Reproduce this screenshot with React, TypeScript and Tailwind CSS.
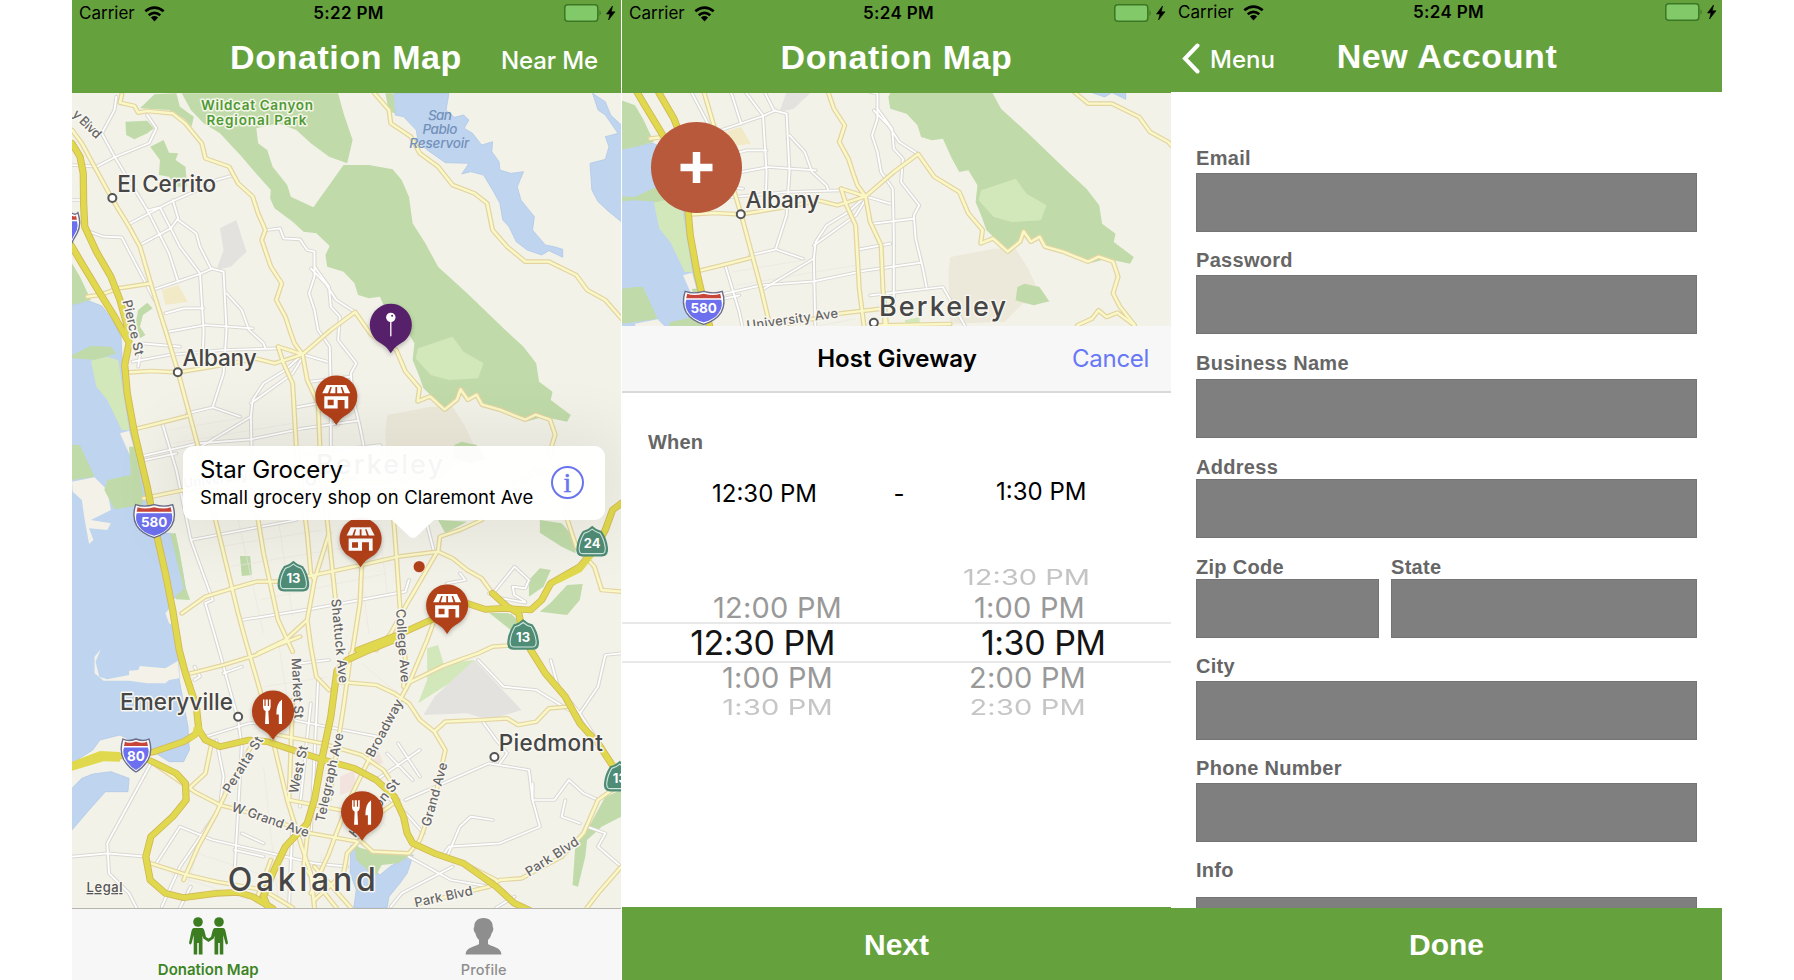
import React from "react";

type Pt = [number, number];

/* Map artwork is drawn on a fine survey grid; KX / KY bring it to screen pixels. */
const KX = 0.36352;
const KY = 1 / 3;
const px = (x: number) => x * KX - 12;
const py = (y: number) => y * KY;

const WATER = [
  "M-40 905L-10 890L33 915L80 903L115 918L145 960L168 1010L172 1100L185 1230L205 1340L235 1480L262 1600L305 1600L335 1700L345 1765L325 1790L300 1800L318 1880L325 1940L328 2040L352 2180L356 2250L340 2285L300 2285L250 2250L165 2205L110 2220L90 2250L33 2290L-40 2300Z",
  "M33 2365L60 2335L90 2322L140 2315L190 2335L187 2375L125 2375L80 2430L33 2490L-40 2520L-40 2400Z",
  "M920 280L1070 280L1062 330L1085 352L1110 345L1125 360L1112 385L1135 400L1160 435L1190 425L1188 455L1208 485L1210 510L1240 520L1275 515L1258 560L1268 600L1305 650L1300 690L1335 735L1360 740L1383 748L1383 772L1345 752L1325 765L1285 750L1255 725L1235 680L1218 660L1210 610L1190 570L1165 525L1130 515L1105 522L1125 490L1060 488L1010 450L985 425L980 390L945 350L922 345Z",
  "M1465 280L1500 305L1515 345L1544 375L1620 400L1620 700L1544 665L1510 635L1480 605L1463 570L1458 490L1500 478L1510 440L1500 410L1535 400L1500 345L1480 330Z",
  "M800 2535L820 2540L840 2585L880 2625L910 2598L960 2570L972 2565L955 2620L935 2650L905 2690L900 2723L808 2723L815 2670L798 2620Z",
];

const GREEN = [
  "M335 280L765 280L780 340L805 420L790 490L740 470L690 430L650 390L600 370L540 385L545 430L570 450L585 500L625 555L635 590L697 622L780 495L850 495L915 508L940 540L960 590L970 670L1005 730L1040 800L1120 880L1225 990L1275 1040L1310 1090L1318 1145L1355 1175L1350 1200L1405 1245L1395 1265L1330 1250L1290 1262L1240 1240L1180 1225L1150 1190L1120 1205L1100 1180L1060 1228L1000 1165L985 1120L970 1080L975 1030L950 985L925 990L905 950L880 890L850 895L820 885L810 850L780 815L735 800L730 765L742 738L705 700L670 695L640 665L590 625L578 595L580 570L535 515L500 470L440 400L395 370L360 330Z",
  "M220 325L260 283L320 280L330 320L368 350L362 380L340 355L300 330Z",
  "M180 365L240 362L258 385L240 400L205 418L182 405Z",
  "M248 440L285 420L300 458L325 460L318 480L345 500L350 560L320 560L300 530L272 525L275 480Z",
  "M895 280L918 280L922 340L905 335Z",
  "M33 790L55 830L85 900L33 915L-40 930L-40 760Z",
  "M33 1065L85 1038L140 1040L155 1060L100 1080L33 1075L-40 1080L-40 1062Z",
  "M33 1335L55 1335L95 1430L33 1440L-40 1450L-40 1345Z",
  "M130 1440L195 1425L190 1340L205 1340L230 1490L225 1515L150 1528L122 1470Z",
  "M495 1668L523 1668L528 1725L500 1728Z",
  "M303 1600L318 1600L330 1660L345 1760L358 1800L318 1798L320 1785L340 1768Z",
  "M215 930L240 908L255 925L228 945L220 980L235 1005L220 1015L208 970Z",
  "M1085 1335L1105 1325L1145 1335L1172 1378L1130 1382L1080 1375Z",
  "M1320 1560L1380 1570L1420 1620L1418 1660L1380 1640L1320 1598Z",
  "M1395 1755L1438 1752L1430 1800L1395 1845L1320 1835L1350 1808Z",
  "M1290 1740L1320 1705L1350 1710L1330 1760L1290 1790Z",
  "M1180 1838L1240 1840L1262 1865L1240 1890Z",
  "M1040 1560L1120 1565L1060 1600Z",
  "M810 2538L830 2545L880 2560L970 2562L930 2590L885 2595L870 2625L840 2605L815 2580Z",
  "M1500 2390L1544 2370L1544 2450L1490 2480L1450 2520L1445 2570L1425 2660L1410 2655L1418 2530L1445 2500Z",
];

const PALE = [
  "M85 1082L130 1070L160 1080L170 1150L190 1290L170 1290L130 1200L100 1160Z",
  "M985 1045L1080 1010L1110 1055L1165 1090L1150 1135L1070 1140L1020 1125L978 1075Z",
  "M1010 1945L1040 1935L1055 1990L1140 1980L1100 2030L985 2110L1010 2040Z",
  "M775 1435L815 1425L818 1454L780 1460Z",
];

const LAND = [
  "M165 1300L190 1292L212 1380L198 1380Z",
  "M33 1445L95 1432L130 1470L140 1530L85 1560L140 1570L130 1590L80 1585L92 1620L80 1632L68 1560L60 1500L35 1475Z",
  "M112 1948L98 1985L108 2030L130 2038L190 2025L190 2012L215 2010L220 1998L290 2005L325 1982L328 2035L300 2040L290 2050L240 2050L190 2042L120 2042L95 2020L95 1970Z",
  "M290 1840L305 1820L320 1880L300 1870Z",
];

const GREY = [
  "M440 685L485 660L513 755L470 800L430 810L450 750Z",
  "M1140 1980L1200 2050L1270 2130L1210 2150L1180 2160L1120 2140L1000 2145L1030 2090Z",
];

const MINOR = [
  "M155 290L150 330L115 400L150 470L240 630L300 760L325 845",
  "M33 495L100 500L150 472L245 430L265 385L240 345",
  "M190 672L300 608L400 560L430 540L470 528",
  "M240 632L275 622L330 740L385 820L395 990L392 1090",
  "M220 735L305 685L325 655L310 600",
  "M325 660L375 700L385 740L415 805L450 815L458 990L450 1120L420 1222L495 1250",
  "M255 870L385 822L420 805",
  "M458 880L500 930L520 990L560 1030L565 1045",
  "M33 600L60 600M68 690L120 710L170 712L260 900",
  "M290 940L340 925L395 925M300 995L400 975L530 985",
  "M200 1085L300 1065L450 1050L600 1045M215 1100L225 1030L330 1040",
  "M570 690L605 685L615 715L660 718L680 750L700 755L700 830L685 880L700 930L710 990L742 1040L745 1180L745 1400",
  "M690 805L730 850L760 900L810 935M700 800L740 860L745 920L770 950L765 1020L815 1090L800 1120L805 1190L825 1280L835 1335",
  "M667 1063L735 1085M667 1063L620 1110L560 1150L530 1200L525 1250L380 1345M667 1073L640 1120L525 1210",
  "M350 1240L420 1222M220 1370L380 1330L525 1318L670 1285L820 1262",
  "M280 1265L320 1410L360 1620L420 1800L400 1810",
  "M650 1222L735 1205M690 1145L800 1130M680 1360L880 1335L940 1450",
  "M525 1250L530 1500L545 1560M235 1380L320 1360M360 1620L650 1560",
  "M500 1860L700 1825L950 1775L960 1740",
  "M400 1810L440 1960L490 2160L500 2240L480 2620",
  "M1010 1575L1030 1660M1100 1720L1115 1740L1065 1750",
  "M1195 1775L1250 1700L1290 1740L1280 1765L1245 1760L1250 1785L1280 1805M1180 1780L1215 1795L1280 1808",
  "M400 2210L520 2170L640 2160L780 2190L885 2212",
  "M430 2220L450 2330L440 2420M250 2290L130 2530L135 2620L190 2680L210 2723",
  "M33 2570L130 2560L235 2570M265 2590L330 2480L420 2520L580 2560L700 2590L790 2600",
  "M280 2720L330 2600L430 2440M640 2450L630 2723M500 2500L560 2530M690 2110L660 2420M710 2040L690 2500",
  "M1150 1980L1220 2060L1310 2070L1400 2130M1544 1960L1500 1965L1480 2060L1430 2140M1350 1980L1370 2060L1430 2140L1520 2290",
  "M870 2340L990 2250M900 2260L970 2340M930 2230L990 2330M950 2400L1180 2290L1290 2310L1300 2400L1360 2400L1400 2340L1440 2380L1480 2400",
  "M1210 2290L1230 2260L1200 2220L1160 2160M1300 2350L1300 2400L1320 2480L1210 2530L1070 2540L1050 2570",
  "M1065 2570L1100 2480L1130 2450L1190 2460M1390 2400L1380 2450L1430 2470M1000 2500L960 2450L900 2390",
  "M910 2720L940 2680L1080 2600M1200 2723L1250 2690M1544 2600L1480 2540L1500 2500L1450 2480M960 2570L1075 2640L1180 2660",
  "M370 2000L385 2030L370 2040M450 2020L500 2000M660 1990L740 1980M480 2550L560 2570M360 2660L330 2723",
];

const MAJOR = [
  "M33 390L60 430L100 510L145 600L190 680L220 740L255 870L290 990L325 1117L380 1340L430 1570L490 1840L510 1920L550 2070L590 2240L625 2400L665 2540L690 2620L700 2723",
  "M170 283L165 308L205 318L215 338L240 333L310 340L345 370L390 430L400 475L465 500L490 550L530 590L545 640L565 690L555 720L580 800L610 850L595 900L620 950L635 1000L645 1030L667 1063",
  "M865 280L905 330L910 370L965 410L990 460L1040 500L1080 555L1140 580L1175 610L1190 690L1230 740L1280 785L1345 785L1420 825L1450 870L1500 900L1544 955L1600 1010",
  "M667 1063L745 990L812 936L856 1004L925 1050L950 1114L989 1164L984 1204L1018 1189L1058 1229L1092 1199L1102 1168L1122 1199L1146 1184L1161 1214L1210 1229L1279 1259L1308 1244L1348 1259L1362 1304L1348 1354L1367 1394L1407 1449L1390 1540L1420 1640L1470 1700L1490 1770L1544 1775",
  "M1250 1450L1290 1430L1308 1405L1330 1425L1360 1412L1407 1450",
  "M190 1117L250 1113L324 1117L420 1100L540 1076L590 1090L620 1080L667 1063L600 1040",
  "M600 1040L615 1090L640 1150L650 1340L680 1600L690 1720L700 1740",
  "M667 1063L680 1140L710 1210L715 1340L735 1560L760 1820L770 1920",
  "M75 890L110 885L160 865L250 850",
  "M215 1285L300 1262L350 1248",
  "M230 1495L340 1470L600 1414L719 1399L720 1450M700 1450L900 1446",
  "M335 1840L400 1790L475 1765L540 1745L600 1745L700 1725L830 1695L930 1670L1040 1655L1080 1675L1120 1710L1160 1735L1190 1780",
  "M1035 1660L950 1820L910 1900L870 1950",
  "M1040 1655L1045 1610L1100 1590L1160 1560",
  "M740 1600L700 1740L680 1860L620 1920L545 1960",
  "M545 1560L560 1660L600 1860L640 1955",
  "M680 1860L690 1940L705 2030L740 2070",
  "M918 1560L925 1660L935 1820L950 1980L945 2060",
  "M830 1695L825 1810L805 1950L785 2030",
  "M360 2020L450 1995L540 1965L600 1935L660 1910",
  "M760 2045L870 2055L920 2080L960 2110L990 2160L1030 2195L1060 2250L1050 2300L1030 2400L990 2520L960 2560L860 2555L825 2520",
  "M1030 2195L1060 2165L1160 2160L1230 2155L1260 2175L1310 2165L1345 2125L1400 2120",
  "M965 2045L1050 2000L1110 1975L1150 1960L1190 1940L1260 1935",
  "M1030 1860L1010 1920L960 2050L900 2170L840 2300L800 2390L760 2500L740 2560L690 2680",
  "M600 2205L720 2230L830 2265L890 2310L920 2360",
  "M250 2285L370 2375L440 2415L560 2450L690 2500L820 2525L790 2560L780 2620L700 2700",
  "M530 2230L460 2370L430 2440L380 2540L340 2640",
  "M415 2240L400 2320L350 2370",
  "M250 2590L350 2625L430 2645L560 2670L640 2723",
  "M1544 2350L1480 2400L1440 2500L1380 2570L1270 2635L1210 2640L1180 2660L980 2712",
  "M1200 2640L1110 2590M1544 2600L1480 2680L1450 2723",
  "M640 2100L630 2400L770 2430L880 2440L930 2400M690 2420L670 2600L760 2723M580 2580L540 2700M700 2600L800 2723",
  "M800 1960L780 2120L740 2400",
];

const HIGHWAY = [
  "M33 430L55 470L64 520L65 610L68 680L100 755L140 830L165 900L183 970L190 1030L178 1095L185 1180L205 1300L240 1460L265 1600L290 1720L310 1830L328 1950L345 2020L375 2120L382 2190",
  "M-40 620L-10 660L33 740L60 790L110 880L150 950L170 990L186 1020",
  "M-40 2310L33 2297L120 2268L200 2268L260 2255L340 2225L370 2205L382 2190L400 2220L440 2240L520 2220L570 2225L640 2250L720 2278L810 2305L870 2340L920 2390L945 2450L955 2500L970 2530L1030 2560L1110 2590L1200 2660L1250 2710L1290 2730",
  "M248 2282L320 2320L345 2350L347 2400L310 2450L250 2510L236 2570L248 2640L290 2680L340 2693L430 2680L490 2677L530 2690L585 2725",
  "M820 1950L940 1900L1040 1850L1100 1795L1120 1810L1170 1828L1220 1825L1295 1830L1325 1800L1350 1750L1430 1700L1470 1650L1500 1590L1520 1530L1550 1505",
  "M940 1911L840 1955L790 1980L762 2012L745 2150L720 2280L700 2400L680 2470L620 2540L585 2620L560 2690L572 2723",
  "M1190 1780L1230 1820L1262 1840L1275 1910L1295 1950L1335 2020L1390 2090L1430 2170L1480 2230L1540 2330",
];

/* Filled areas where the carriageways widen. */
const INTERCHANGE = [
  "M33 2285L110 2253L165 2256L165 2285L120 2284L33 2312Z",
  "M1350 1742L1400 1718L1450 1670L1478 1655L1435 1715L1380 1745L1350 1758Z",
  "M368 2180L390 2180L398 2212L380 2206L360 2225Z",
];

function Roads({ paths, casing, fill, w, edge }: { paths: string[]; casing: string; fill: string; w: number; edge: number }) {
  return (
    <g fill="none" strokeLinejoin="round" strokeLinecap="round">
      <g stroke={casing} strokeWidth={w + edge}>{paths.map((d) => <path key={d} d={d} />)}</g>
      <g stroke={fill} strokeWidth={w}>{paths.map((d) => <path key={d} d={d} />)}</g>
    </g>
  );
}

function Place({ t, x, y, w, s = 22.5 }: { t: string; x: number; y: number; w: number; s?: number }) {
  return (
    <text x={px(x) - 1} y={py(y)} fontSize={s} textLength={w + 1} fontWeight={500} fill="#464646" stroke="#f8f6f0" strokeWidth={3} paintOrder="stroke" strokeLinejoin="round">{t}</text>
  );
}

function Dot({ x, y }: { x: number; y: number }) {
  return <circle cx={px(x)} cy={py(y)} r={4} fill="#fff" stroke="#555" strokeWidth={2} />;
}

function Street({ t, a, b }: { t: string; a: Pt; b: Pt }) {
  const [x1, y1, x2, y2] = [px(a[0]), py(a[1]), px(b[0]), py(b[1])];
  const deg = (Math.atan2(y2 - y1, x2 - x1) * 180) / Math.PI;
  return (
    <text transform={`translate(${x1} ${y1}) rotate(${deg})`} fontSize={13} textLength={Math.hypot(x2 - x1, y2 - y1)} fontWeight={500} fill="#666" stroke="#f8f6f0" strokeWidth={3} paintOrder="stroke" strokeLinejoin="round">{t}</text>
  );
}

function Interstate({ t, x, y, w }: { t: string; x: number; y: number; w: number }) {
  const h = w / 2;
  return (
    <g transform={`translate(${px(x)} ${py(y)})`}>
      <path d={`M${-h + 2} -16Q${-h / 2} -13 0 -16Q${h / 2} -13 ${h - 2} -16Q${h + 2} -4 ${h - 3} 5Q${h - 8} 13 0 17Q${-h + 8} 13 ${-h + 3} 5Q${-h - 2} -4 ${-h + 2} -16Z`} fill="#fff" stroke="#6c6f8c" strokeWidth={1.4} />
      <path d={`M${-h + 3} -7.5H${h - 3}Q${h - 1} -1 ${h - 5} 5Q${h - 9} 12 0 15Q${-h + 9} 12 ${-h + 5} 5Q${-h + 1} -1 ${-h + 3} -7.5Z`} fill="#6c70ee" />
      <path d={`M${-h + 4} -13.5Q${-h / 2} -11 0 -13.5Q${h / 2} -11 ${h - 4} -13.5L${h - 3} -9H${-h + 3}Z`} fill="#c8453a" />
      <text y={6} fontSize={13.5} fontWeight={700} fill="#fff" textAnchor="middle">{t}</text>
    </g>
  );
}

function StateRoute({ t, x, y }: { t: string; x: number; y: number }) {
  return (
    <g transform={`translate(${px(x)} ${py(y)})`}>
      <path d="M0 -15Q4 -11 9 -10Q14 -3 15 6Q16 14 10 14H-10Q-16 14 -15 6Q-14 -3 -9 -10Q-4 -11 0 -15Z" fill="#4f8c76" stroke="#4f8c76" strokeWidth={1.5} strokeLinejoin="round" />
      <path d="M0 -12.500Q4 -9 8 -8.300Q12 -2 13 6Q13.500 12 9.500 12H-9.500Q-13.500 12 -13 6Q-12 -2 -8 -8.300Q-4 -9 0 -12.500Z" fill="none" stroke="#cfe6dd" strokeWidth={1.1} />
      <text y={6.500} fontSize={13} fontWeight={700} fill="#fff" textAnchor="middle">{t}</text>
    </g>
  );
}

function Pin({ x, y, color, children }: { x: number; y: number; color: string; children: React.ReactNode }) {
  return (
    <g transform={`translate(${px(x)} ${py(y) - 27.8})`}>
      <path d="M0 -21A21 21 0 0 1 10.500 18.200C6 20.800 3.500 23 0 28.500C-3.500 23 -6 20.800 -10.500 18.200A21 21 0 0 1 0 -21Z" fill={color} style={{ filter: "drop-shadow(0 2px 2px rgba(0,0,0,.25))" }} />
      {children}
    </g>
  );
}

const StoreGlyph = () => (
  <g fill="#fff">
    <path d="M-10 -11.500H10V-9.500H-10Z" />
    <path d="M-10 -11H-5.400L-8.300 -3.300H-14ZM-4 -11H-0.900V-3.300H-6.300ZM0.900 -11H4L6.300 -3.300H0.900ZM5.400 -11H10L14 -3.300H8.300Z" />
    <path fillRule="evenodd" d="M-12 -0.300H12V12H8.300V3.400H1.400V12H-12ZM-8.600 3.300V8.800H-2.600V3.300Z" />
  </g>
);

const FoodGlyph = () => (
  <g fill="#fff">
    <path d="M-10 -12H-8.600V-5.500H-7.400V-12H-5.200V-5.500H-4V-12H-2.400V-4.500Q-2.500 -1.500 -4.700 -0.500L-4 12.500H-8L-7.400 -0.500Q-9.900 -1.500 -10 -4.500Z" />
    <path d="M9 -12V12.500H5.800V3H3.300Q3 -8 9 -12Z" />
  </g>
);

function BayMap({ shift = false, className }: { shift?: boolean; className: string }) {
  return (
    <svg className={className} viewBox={shift ? "-13 251 549 233" : "0 93 549 815"} preserveAspectRatio="none" fontFamily="Inter, sans-serif">
      <rect x={-20} y={90} width={600} height={830} fill="#f3f2e9" />
      <g transform={`translate(-12 0) scale(${KX} ${KY})`}>
        {WATER.map((d) => <path key={d} d={d} fill="#bfd4ee" stroke="#adc6e6" strokeWidth={2} />)}
        {LAND.map((d) => <path key={d} d={d} fill="#f3f1e8" />)}
        {GREEN.map((d) => <path key={d} d={d} fill="#c0dba9" />)}
        {PALE.map((d) => <path key={d} d={d} fill="#d2e8bb" />)}
        {GREY.map((d) => <path key={d} d={d} fill="#e3e2df" />)}
        <path d="M900 1245L1020 1220L1080 1220L1115 1280L1140 1340L1175 1380L1100 1385L1050 1440L900 1445L895 1290Z" fill="#ede9da" />
        <path d="M1085 1335L1105 1325L1145 1335L1172 1378L1130 1390L1080 1375Z" fill="#c0dba9" />
        <path d="M280 870L325 855L352 905L290 915Z" fill="#f2eac6" />
        <path d="M875 2250L890 2290L840 2300M770 2330L810 2310L815 2370L770 2385Z" fill="#f2e3df" />
        <g fill="none" stroke="#e9e7df" strokeWidth={2}>
          <path d="M300 1290L520 1250M310 1330L640 1270M400 1480L640 1430M420 1520L700 1460M440 1640L720 1590M470 1700L800 1640M550 1800L900 1720M470 1460L560 1900M590 1480L640 1850M800 1480L850 1900M880 1600L900 1780M600 1920L640 2200M560 2060L740 2030M830 1990L930 2080M380 2560L600 2640M300 2620L520 2700M400 2470L340 2700M560 2300L600 2700M720 2560L700 2723M830 2420L900 2480" />
        </g>
        <Roads paths={MINOR} casing="#d9d8d2" fill="#ffffff" w={5} edge={6} />
        <Roads paths={MAJOR} casing="#e3d4a2" fill="#fbf8c8" w={7} edge={7} />
        <Roads paths={HIGHWAY} casing="#d3b857" fill="#e0d94e" w={15} edge={5} />
        {INTERCHANGE.map((d) => <path key={d} d={d} fill="#e0d94e" />)}
      </g>

      <g fill="#4f9a34" stroke="#f5f6ea" strokeWidth={3} paintOrder="stroke" strokeLinejoin="round" fontWeight={600} fontSize={13.5}>
        <text x={px(388)} y={py(329)} textLength={112}>Wildcat Canyon</text>
        <text x={px(403)} y={py(376)} textLength={100}>Regional Park</text>
      </g>
      <g fill="#7391ba" fontStyle="italic" fontWeight={500} fontSize={13.5}>
        <text x={px(1012)} y={py(360)} textLength={24}>San</text>
        <text x={px(997)} y={py(402)} textLength={35}>Pablo</text>
        <text x={px(961)} y={py(443)} textLength={60}>Reservoir</text>
      </g>
      <Street t="y Blvd" a={[32, 345]} b={[100, 418]} />
      <Street t="Pierce St" a={[172, 903]} b={[207, 1068]} />
      <Street t="University Ave" a={[342, 1464]} b={[593, 1426]} />
      <Street t="Shattuck Ave" a={[746, 1798]} b={[768, 2050]} />
      <Street t="College Ave" a={[924, 1828]} b={[938, 2048]} />
      <Street t="Market St" a={[637, 1975]} b={[645, 2156]} />
      <Street t="Peralta St" a={[467, 2382]} b={[560, 2220]} />
      <Street t="West St" a={[654, 2382]} b={[682, 2240]} />
      <Street t="Telegraph Ave" a={[727, 2468]} b={[780, 2202]} />
      <Street t="Broadway" a={[862, 2275]} b={[944, 2106]} />
      <Street t="W Grand Ave" a={[470, 2432]} b={[680, 2512]} />
      <Street t="Grand Ave" a={[1018, 2482]} b={[1066, 2292]} />
      <Street t="Harrison St" a={[812, 2515]} b={[936, 2350]} />
      <Street t="Park Blvd" a={[1290, 2630]} b={[1430, 2532]} />
      <Street t="Park Blvd" a={[978, 2722]} b={[1137, 2684]} />

      <Dot x={144} y={594} /><Place t="El Cerrito" x={160} y={577} w={98} />
      <Dot x={324} y={1117} /><Place t="Albany" x={340} y={1098} w={73} />
      <Dot x={690} y={1442} /><Place t="Berkeley" x={707} y={1423} w={126} s={27} />
      <Dot x={490} y={2150} /><Place t="Emeryville" x={168} y={2131} w={112} />
      <Dot x={1195} y={2271} /><Place t="Piedmont" x={1210} y={2253} w={103} />
      <Place t="Oakland" x={464} y={2673} w={147} s={32} />

      {shift ? (
        <Interstate t="580" x={222} y={1396} w={41} />
      ) : (
        <>
          <Interstate t="580" x={259} y={1562} w={41} />
          <Interstate t="80" x={209} y={2265} w={30} />
          <Interstate t="" x={30} y={686} w={18} />
          <StateRoute t="13" x={642} y={1730} />
          <StateRoute t="24" x={1464} y={1625} />
          <StateRoute t="13" x={1274} y={1905} />
          <StateRoute t="13" x={1540} y={2330} />
          <circle cx={px(988)} cy={py(1700)} r={6} fill="#b14119" stroke="#fff" strokeOpacity={0.7} />
          <Pin x={910} y={1058} color="#57206a">
            <circle cy={-7.500} r={4.700} fill="#fff" />
            <circle cx={1.300} cy={-9} r={1} fill="#57206a" />
            <path d="M0 -5V11" stroke="#fff" strokeWidth={1.300} strokeLinecap="round" />
          </Pin>
          <Pin x={760} y={1273} color="#b14119"><StoreGlyph /></Pin>
          <Pin x={827} y={1700} color="#b14119"><StoreGlyph /></Pin>
          <Pin x={1065} y={1900} color="#b14119"><StoreGlyph /></Pin>
          <Pin x={586} y={2218} color="#b14119"><FoodGlyph /></Pin>
          <Pin x={831} y={2520} color="#b14119"><FoodGlyph /></Pin>
          <text x={14.500} y={892} fontSize={13} textLength={36} fontWeight={500} fill="#555" textDecoration="underline" stroke="#f8f6f0" strokeWidth={2} paintOrder="stroke">Legal</text>
        </>
      )}
    </svg>
  );
}

function StatusBar({ time }: { time: string }) {
  return (
    <div className="grid h-[27px] grid-cols-3 items-start text-black">
      <div className="flex items-start gap-[9px] pl-[7px]">
        <span className="text-[17px] leading-[27px]">Carrier</span>
        <svg className="mt-[6px]" width="21" height="16" viewBox="0 0 21 16">
          <path d="M10.500 15.500L6.900 11.400Q10.500 8.700 14.100 11.400Z" />
          <path d="M4.700 9.200Q10.500 4.400 16.300 9.200M1.300 5.300Q10.500 -2.200 19.700 5.300" fill="none" stroke="#000" strokeWidth="2.700" />
        </svg>
      </div>
      <span className="pl-[4px] text-center text-[17px] font-semibold leading-[27px] tracking-[0.3px]">{time}</span>
      <div className="flex justify-end pr-[5px] pt-[4px]">
        <svg width="52" height="18" viewBox="0 0 52 18">
          <rect x="0.800" y="0.800" width="33" height="16.400" rx="3" fill="#82ca69" stroke="#3c7724" strokeWidth="1.500" />
          <path d="M35.500 6Q38 9 35.500 12Z" fill="#3c7724" />
          <path d="M48.500 2L42.500 10H46L44.500 16L51 7.800H47.300Z" fill="#000" stroke="#000" strokeWidth="0.600" />
        </svg>
      </div>
    </div>
  );
}

const title = "text-center font-['Liberation_Sans',Arial,sans-serif] text-[34px] font-bold leading-[40px] tracking-[0.6px]";

function Field({ label, className }: { label: string; className: string }) {
  return (
    <label className={`flex flex-col font-['Liberation_Sans',Arial,sans-serif] text-[20px] font-bold leading-6 tracking-[0.3px] text-[#666] ${className}`}>
      <span>{label}</span>
      <span className="h-[59px] border border-[#747474] bg-[#7f7f7f]" />
    </label>
  );
}

export default function App() {
  return (
    <main className="flex h-[980px] w-[1794px] overflow-hidden bg-white pl-[72px] font-[Inter,sans-serif]">
      <section className="relative flex w-[549px] flex-col overflow-hidden">
        <header className="h-[93px] bg-[#65a23d] text-white">
          <StatusBar time="5:22 PM" />
          <div className="grid h-[60px] grid-cols-[153px_242px_1fr]">
            <span />
            <h1 className={`whitespace-nowrap pt-[10px] ${title}`}>Donation Map</h1>
            <span className="whitespace-nowrap pr-[23px] pt-[20px] text-right text-[24px] font-medium leading-7 tracking-[-0.1px]">Near Me</span>
          </div>
        </header>
        <BayMap className="h-[815px] w-full" />
        <nav className="grid h-[72px] grid-cols-2 border-t border-[#b5b4ae] bg-[#f7f7f7] text-[14.5px] leading-[18px]">
          <div className="flex flex-col items-center pr-[2px] pt-2 text-[15px] font-semibold text-[#3d8524]">
            <svg width="39" height="38" viewBox="0 0 39 38" fill="#3d7d22">
              <circle cx="9" cy="5" r="4.800" /><circle cx="30" cy="5" r="4.800" />
              <path d="M4.500 11H13.500Q15 11.500 15.500 14L17 20L19.500 21.500L22 20L23.500 14Q24 11.500 25.500 11H34.500Q36 11.500 36.500 14L39 26Q38 28.500 36.500 26.500L34.300 18V37.500H30.800V26H29.200V37.500H25.500V18.500L24.700 21.500L19.500 25L14.300 21.500L13.500 18.500V37.500H9.800V26H8.200V37.500H4.700V18L2.500 26.500Q1 28.500 0 26L2.500 14Q3 11.500 4.500 11Z" />
            </svg>
            <span className="mt-[6px]">Donation Map</span>
          </div>
          <div className="flex flex-col items-center pt-[9px] font-medium text-[#8e8e8e]">
            <svg width="37" height="37" viewBox="0 0 37 37" fill="#8e8e8e">
              <path d="M18.500 0C25 0 28 4 27.700 9C29 10 28 14 26.700 15C26 18.500 24.500 20.500 23 22V26C25 28.500 36 28.500 36.500 36.500H0.500C1 28.500 12 28.500 14 26V22C12.500 20.500 11 18.500 10.300 15C9 14 8 10 9.300 9C9 4 12 0 18.500 0Z" />
            </svg>
            <span className="mt-[6px] tracking-[0.2px]">Profile</span>
          </div>
        </nav>
        <div className="absolute left-[111px] top-[446px] flex h-[74px] w-[422px] items-center justify-between whitespace-nowrap rounded-[11px] bg-white/95 pl-[17px] pr-[21px] text-black shadow-[0_0_60px_20px_rgba(0,0,0,0.06)]">
          <div className="w-[335px] pt-px">
            <div className="text-[24px] leading-[28px] tracking-[-0.1px]">Star Grocery</div>
            <div className="text-[18.500px] leading-[27px] tracking-[0.120px]">Small grocery shop on Claremont Ave</div>
          </div>
          <span className="-mt-px flex size-[33px] items-center justify-center rounded-full border-2 border-[#6a74ee] font-['Liberation_Serif',serif] text-[28px] leading-none text-[#6a74ee] [-webkit-text-stroke:0.5px_#6a74ee]">i</span>
          <svg className="absolute left-[209px] top-[74px]" width="42" height="19" viewBox="0 0 42 19">
            <path d="M0 0H42L24.500 16.500Q21 19.500 17.500 16.500Z" fill="#fff" fillOpacity=".97" />
          </svg>
        </div>
      </section>

      <section className="relative ml-px flex w-[549px] flex-col overflow-hidden">
        <header className="h-[93px] bg-[#65a23d] text-white">
          <StatusBar time="5:24 PM" />
          <h1 className={`pt-[10px] ${title}`}>Donation Map</h1>
        </header>
        <BayMap shift className="h-[233px] w-full" />
        <button className="absolute left-[29px] top-[122px] flex size-[91px] items-center justify-center rounded-full bg-[#b9593c]">
          <svg width="33" height="33" viewBox="0 0 33 33"><path d="M16.500 1V32M0.500 16.500H32.500" stroke="#fff" strokeWidth="7.500" /></svg>
        </button>
        <div className="grid h-[67px] grid-cols-[160px_230px_1fr] items-center border-b-2 border-[#d9d9d9] bg-[#f7f7f7] pt-px text-[24px]">
          <span />
          <h2 className="text-center font-semibold tracking-[0px]">Host Giveway</h2>
          <span className="pr-[22px] text-right tracking-[-0.3px] text-[#6877f5]">Cancel</span>
        </div>
        <div className="h-[514px] bg-white">
          <div className="pl-[26px] pt-[37px] font-['Liberation_Sans',Arial,sans-serif] text-[20px] font-bold leading-6 tracking-[0.2px] text-[#666]">When</div>
          <div className="mt-[20px] grid grid-cols-[90px_104px_1fr_90px_85px] whitespace-nowrap text-[24px] leading-9 text-black">
            <span />
            <span className="pt-[2px]">12:30 PM</span>
            <span className="pr-[14px] pt-[2px] text-center">-</span>
            <span>1:30 PM</span>
          </div>
          <div className="mt-[48px] grid grid-cols-[220px_1fr_130px_81px] whitespace-nowrap text-right leading-none">
            <div className="flex flex-col pt-[32px] text-[#999]">
              <span className="h-[30px] text-[29px] leading-[32px] tracking-[0.2px]">12:00 PM</span>
            </div>
            <span />
            <div className="flex flex-col pt-[3px]">
              <span className="h-[29px] scale-y-[.75] text-[29px] leading-[29px] text-[#c4c4c4]">12:30 PM</span>
              <span className="h-[30px] pr-[5px] text-[29px] leading-[32px] tracking-[0.2px] text-[#999]">1:00 PM</span>
            </div>
          </div>
          <div className="grid h-[41px] grid-cols-[213px_1fr_124px_66px] items-center whitespace-nowrap border-y-2 border-[#e8e8e8] text-right text-[34px] leading-[37px] tracking-[-0.5px] text-[#141414]">
            <span>12:30 PM</span>
            <span />
            <span>1:30 PM</span>
          </div>
          <div className="grid grid-cols-[211px_1fr_130px_85px] whitespace-nowrap text-right text-[29px] tracking-[0.2px] text-[#999]">
            <div className="flex flex-col">
              <span className="h-[30px] leading-[29px]">1:00 PM</span>
              <span className="h-[30px] scale-y-[.75] leading-[28px] text-[#c6c6c6]">1:30 PM</span>
            </div>
            <span />
            <div className="flex flex-col">
              <span className="h-[30px] leading-[29px]">2:00 PM</span>
              <span className="h-[30px] scale-y-[.75] leading-[28px] text-[#c6c6c6]">2:30 PM</span>
            </div>
          </div>
        </div>
        <footer className="h-[73px] bg-[#65a23d] pt-[20px] text-center font-['Liberation_Sans',Arial,sans-serif] text-[30px] font-bold leading-9 text-white">Next</footer>
      </section>

      <section className="flex w-[551px] flex-col overflow-hidden">
        <header className="-mt-px h-[93px] shrink-0 bg-[#65a23d] text-white">
          <StatusBar time="5:24 PM" />
          <div className="grid h-[60px] grid-cols-[163px_226px_1fr]">
            <div className="flex gap-[10px] pl-[11px] pt-[17px]">
              <svg width="18" height="31" viewBox="0 0 18 31"><path d="M15.500 2.500L3 15.500L15.500 28.500" fill="none" stroke="#fff" strokeWidth="4" strokeLinecap="round" /></svg>
              <span className="pt-[3px] text-[24px] font-medium leading-7">Menu</span>
            </div>
            <h1 className={`whitespace-nowrap pt-[10px] ${title}`}>New Account</h1>
          </div>
        </header>
        <form className="flex min-h-0 flex-1 flex-col overflow-hidden bg-white pl-[25px] pr-[25px]">
          <Field label="Email" className="mt-[54px] gap-[3px]" />
          <Field label="Password" className="mt-[16px] gap-[3px]" />
          <Field label="Business Name" className="mt-[17px] gap-[4px]" />
          <Field label="Address" className="mt-[17px] gap-0" />
          <div className="mt-[17px] grid grid-cols-[183px_1fr] gap-[12px]">
            <Field label="Zip Code" className="gap-0" />
            <Field label="State" className="gap-0" />
          </div>
          <Field label="City" className="mt-[16px] gap-[3px]" />
          <Field label="Phone Number" className="mt-[16px] gap-[3px]" />
          <Field label="Info" className="mt-[16px] gap-[15px]" />
        </form>
        <footer className="h-[72px] shrink-0 bg-[#65a23d] pt-[19px] text-center font-['Liberation_Sans',Arial,sans-serif] text-[30px] font-bold leading-9 text-white">Done</footer>
      </section>
    </main>
  );
}
